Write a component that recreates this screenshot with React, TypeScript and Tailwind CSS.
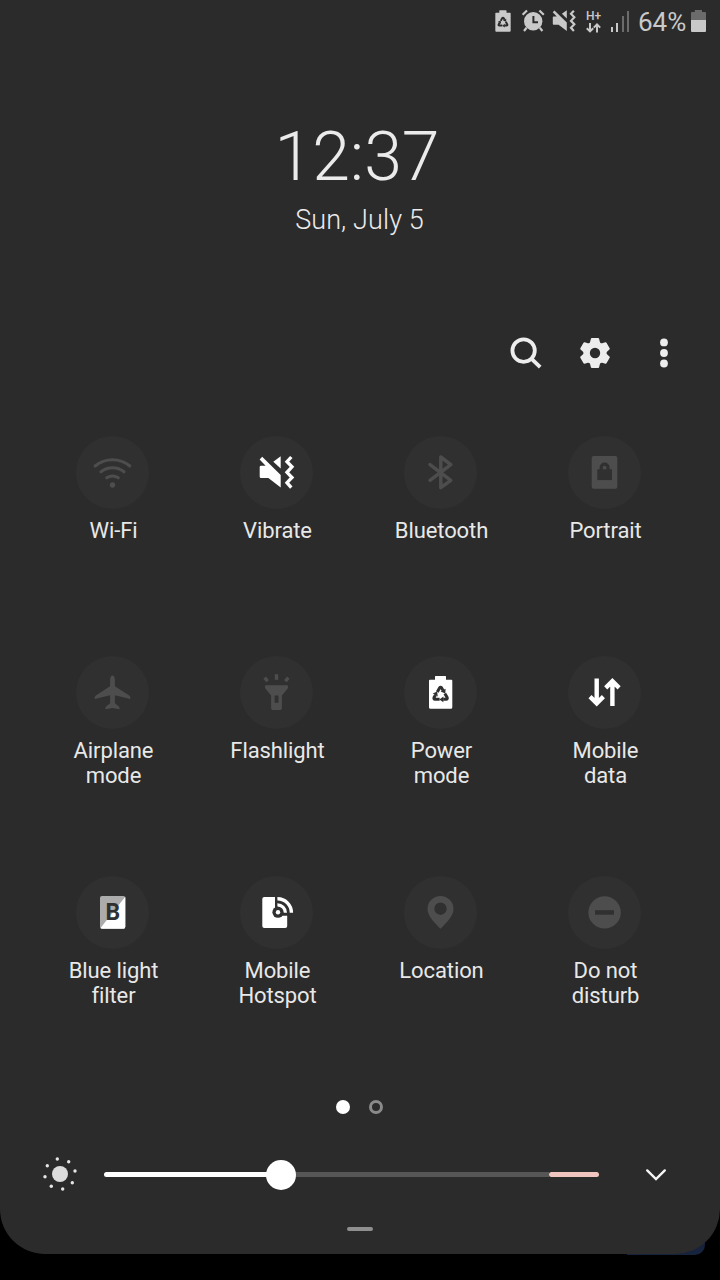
import type { ReactNode } from "react";

type Tile = {
  label: string;
  active: boolean;
  icon: ReactNode;
};

const TILE_BG = "#303030";

function VibrateShape() {
  return (
    <>
      <path
        d="M21 29.7H25.6L19.6 23.4L22.2 20.8L40.7 38.9V51.4L28.4 42H21Q19.7 42 19.7 40.7V31Q19.7 29.7 21 29.7Z"
        fill="currentColor"
      />
      <path d="M33.3 25.7L40.7 20.2V32.6Z" fill="currentColor" />
      <path
        d="M51.3 21L47 25.7L52 30.8L47 36.3L52 41.5L47 46.7L51.3 51.6"
        fill="none"
        stroke="currentColor"
        strokeWidth="3.3"
      />
    </>
  );
}

function EcoBatteryShape({ hole }: { hole: string }) {
  return (
    <>
      <path
        d="M31 23.7V20.6Q31 20 31.6 20H41.4Q42 20 42 20.6V23.7H47.3Q48.3 23.7 48.3 24.7V51.2Q48.3 52.7 46.8 52.7H26.5Q25 52.7 25 51.2V24.7Q25 23.7 26 23.7Z"
        fill="currentColor"
      />
      {[0, 120, 240].map((angle) => (
        <g key={angle} transform={`rotate(${angle} 36.6 38.9)`}>
          <path
            d="M33.3 35.9L35.5 32Q36.6 30.6 37.7 32L39.1 34.4"
            fill="none"
            stroke={hole}
            strokeWidth="3"
          />
          <path d="M36.6 35.6L41.6 32.8L41.3 37.6Z" fill={hole} />
        </g>
      ))}
    </>
  );
}

const TILES: Tile[] = [
  {
    label: "Wi-Fi",
    active: false,
    icon: (
      <>
        <g fill="none" stroke="currentColor" strokeWidth="3.1" strokeLinecap="round">
          <path d="M19.2 30A27 27 0 0 1 53.8 30" />
          <path d="M25 35.8A18.5 18.5 0 0 1 48 35.8" />
          <path d="M30.7 41.8A11 11 0 0 1 42.3 41.8" />
        </g>
        <circle cx="36.5" cy="49" r="2.7" fill="currentColor" />
      </>
    ),
  },
  { label: "Vibrate", active: true, icon: <VibrateShape /> },
  {
    label: "Bluetooth",
    active: false,
    icon: (
      <path
        d="M26 28.6L46.8 44.3L36.8 51.6V21L46.8 28.6L26 44.3"
        fill="none"
        stroke="currentColor"
        strokeWidth="3.5"
        strokeLinecap="round"
        strokeLinejoin="round"
      />
    ),
  },
  {
    label: "Portrait",
    active: false,
    icon: (
      <>
        <rect x="23.7" y="20" width="25.6" height="32.7" rx="2" fill="currentColor" />
        <rect x="29.3" y="33.3" width="14.7" height="10.8" fill={TILE_BG} />
        <path d="M33.2 34V31.5A3.4 3.4 0 0 1 40 31.5V34" fill="none" stroke={TILE_BG} strokeWidth="3.2" />
      </>
    ),
  },
  {
    label: "Airplane\nmode",
    active: false,
    icon: (
      <path
        d="M36.5 19.5C37.9 19.5 38.9 21.6 38.9 24V30.2L53.2 39.6Q54.6 40.6 54.3 42.9L38.9 39.2V47.2L42.8 50.4Q43.8 51.3 43.6 53.2L36.5 51.9L29.4 53.2Q29.2 51.3 30.2 50.4L34.1 47.2V39.2L18.7 42.9Q18.4 40.6 19.8 39.6L34.1 30.2V24C34.1 21.6 35.1 19.5 36.5 19.5Z"
        fill="currentColor"
      />
    ),
  },
  {
    label: "Flashlight",
    active: false,
    icon: (
      <>
        <path
          fillRule="evenodd"
          d="M26 29.2H47Q48 29.2 48 30.2V31.2Q48 32.2 47.3 33L41.9 39.4V52.3Q41.9 54 40.2 54H32.8Q31.1 54 31.1 52.3V39.4L25.7 33Q25 32.2 25 31.2V30.2Q25 29.2 26 29.2ZM34.6 39.4V46.8H38.5V39.4Z"
          fill="currentColor"
        />
        <path d="M36.5 18.2V23.8M24.7 21.6L27.6 25.2M48.3 21.6L45.4 25.2" stroke="currentColor" strokeWidth="3.4" />
      </>
    ),
  },
  { label: "Power\nmode", active: true, icon: <EcoBatteryShape hole={TILE_BG} /> },
  {
    label: "Mobile\ndata",
    active: true,
    icon: (
      <g fill="none" stroke="currentColor" strokeWidth="4.4">
        <path d="M28.7 22.6V47M22 40.6L28.7 47.3L35.4 40.6" />
        <path d="M44.4 50V26M37.7 31.9L44.4 25.2L51.1 31.9" />
      </g>
    ),
  },
  {
    label: "Blue light\nfilter",
    active: true,
    icon: (
      <>
        <rect x="24" y="20" width="25.3" height="32.7" rx="2" fill="#acacac" />
        <path d="M49.3 20.8V50.7Q49.3 52.7 47.3 52.7H26Q25 52.7 24.5 52Z" fill="#ffffff" />
        <text x="36.8" y="44" textAnchor="middle" fontFamily="Roboto, sans-serif" fontWeight="700" fontSize="23" fill={TILE_BG}>
          B
        </text>
      </>
    ),
  },
  {
    label: "Mobile\nHotspot",
    active: true,
    icon: (
      <>
        <path d="M24.3 21H35V36H38V39.8H47.2V50Q47.2 52 45.2 52H24.3Q22.3 52 22.3 50V23Q22.3 21 24.3 21Z" fill="currentColor" />
        <circle cx="38" cy="36.2" r="5.6" fill={TILE_BG} />
        <circle cx="38" cy="36.2" r="2.2" fill="currentColor" />
        <g fill="none" stroke="currentColor">
          <path d="M37.4 22.8A13.8 13.8 0 0 1 51.4 36.8" strokeWidth="3.4" />
          <path d="M37.4 28.9A7.9 7.9 0 0 1 45.4 36.8" strokeWidth="3.2" />
        </g>
      </>
    ),
  },
  {
    label: "Location",
    active: false,
    icon: (
      <path
        fillRule="evenodd"
        d="M36.5 20A13 13 0 0 1 49.5 33C49.5 39.5 43.5 45.8 36.5 52.7C29.5 45.8 23.5 39.5 23.5 33A13 13 0 0 1 36.5 20ZM36.5 26.5A6.2 6.2 0 1 0 36.5 38.9A6.2 6.2 0 1 0 36.5 26.5Z"
        fill="currentColor"
      />
    ),
  },
  {
    label: "Do not\ndisturb",
    active: false,
    icon: (
      <>
        <circle cx="36.6" cy="36.4" r="16.2" fill="currentColor" />
        <rect x="27" y="34.2" width="19" height="4.5" fill={TILE_BG} />
      </>
    ),
  },
];

function StatusBar() {
  return (
    <div className="flex h-[44px] items-center justify-end pr-[14px] text-[#c9c9c9]">
      <svg className="h-[22px] w-[16px] -translate-y-px" viewBox="24.5 19.7 24.3 33.3">
        <EcoBatteryShape hole="#2b2b2b" />
      </svg>
      <svg className="ml-[9.5px] size-6 -translate-y-px" viewBox="0 0 24 24">
        <circle cx="12.2" cy="12.2" r="9.2" fill="currentColor" />
        <path d="M1.6 5.8L6 1.5M22.8 5.8L18.4 1.5M5.6 18.8L3 22M18.8 18.8L21.4 22" stroke="currentColor" strokeWidth="2.2" />
        <path d="M12.4 7V13.2H17" fill="none" stroke="#2b2b2b" strokeWidth="2" />
      </svg>
      <svg className="ml-[7px] size-6 -translate-y-px" viewBox="18.5 18.5 36 36">
        <VibrateShape />
      </svg>
      <div className="ml-[9.5px] flex h-[22px] w-[17px] flex-col items-center">
        <span className="font-[Roboto,sans-serif] text-[12px] leading-[11px] font-medium">H+</span>
        <svg className="mt-[1px] h-[10px] w-[17px]" viewBox="0 0 17 10">
          <path
            d="M5 0V8M1.8 5.2L5 8.4L8.2 5.2M12 9.5V1.5M8.8 4.6L12 1.4L15.2 4.6"
            fill="none"
            stroke="currentColor"
            strokeWidth="2"
          />
        </svg>
      </div>
      <div className="ml-[8.5px] flex h-[21px] w-[19px] -translate-y-px items-end justify-between">
        <div className="h-[5px] w-[2px] bg-[#c9c9c9]" />
        <div className="h-[9px] w-[2px] bg-[#c9c9c9]" />
        <div className="h-[16px] w-[2px] bg-[#6b6b6b]" />
        <div className="h-[21px] w-[2px] bg-[#6b6b6b]" />
      </div>
      <span className="ml-[8.5px] w-[48px] text-[26px] leading-[30px]">64%</span>
      <svg className="ml-[5px] h-[22px] w-[15px] -translate-y-px" viewBox="0 0 15 22">
        <path d="M3.8 2V0H11V2H14Q15 2 15 3V10H0V3Q0 2 1 2Z" fill="#6b6b6b" />
        <path d="M0 10H15V21Q15 22 14 22H1Q0 22 0 21Z" fill="currentColor" />
      </svg>
    </div>
  );
}

function Toolbar() {
  return (
    <div className="mt-[99px] flex justify-end gap-[29px] pr-[36px] text-[#ededed]">
      <svg className="size-10" viewBox="0 0 40 40" fill="none" stroke="currentColor" strokeWidth="3.8">
        <circle cx="17.6" cy="17.6" r="11.2" />
        <path d="M25.6 25.8L34.2 34.2" />
      </svg>
      <svg className="size-10" viewBox="0 0 40 40">
        <g fill="currentColor">
          <circle cx="20" cy="20" r="11.6" />
          {[0, 60, 120, 180, 240, 300].map((angle) => (
            <path
              key={angle}
              d="M16.8 4.9H23.2Q23.9 4.9 24.1 5.7L25.3 10.5L20 14L14.7 10.5L15.9 5.7Q16.1 4.9 16.8 4.9Z"
              transform={`rotate(${angle} 20 20)`}
            />
          ))}
        </g>
        <circle cx="20" cy="20" r="5.2" fill="#2b2b2b" />
      </svg>
      <svg className="size-10" viewBox="0 0 40 40" fill="currentColor">
        <circle cx="20" cy="9.4" r="3.9" />
        <circle cx="20" cy="20" r="3.9" />
        <circle cx="20" cy="30.5" r="3.9" />
      </svg>
    </div>
  );
}

function QuickTile({ label, active, icon }: Tile) {
  return (
    <div className="flex h-[220px] flex-col items-center">
      <div className={`size-[73px] rounded-full bg-[#303030] ${active ? "text-white" : "text-[#4d4d4d]"}`}>
        <svg className="size-full" viewBox="0 0 73 73">
          {icon}
        </svg>
      </div>
      <p className="mt-[9px] ml-[2px] text-center text-[22px] leading-[25px] tracking-[-0.1px] whitespace-pre text-[#e8e8e8]">
        {label}
      </p>
    </div>
  );
}

const SUN_RAYS = [
  [17.3, 5],
  [28.7, 7.7],
  [35, 17],
  [32.3, 28.7],
  [22.7, 35],
  [11.3, 32.3],
  [5, 22.7],
  [7.3, 11.7],
];

function BrightnessRow() {
  return (
    <div className="mt-[40px] flex h-[41px] items-center pl-[40px]">
      <svg className="size-10 -translate-y-px" viewBox="0 0 40 40">
        <circle cx="20" cy="20" r="8" fill="#dcdcdc" />
        {SUN_RAYS.map(([x, y]) => (
          <circle key={`${x}-${y}`} cx={x} cy={y} r="1.7" fill="#e6e6e6" />
        ))}
      </svg>
      <div className="ml-[24px] flex w-[495px] items-center">
        <div className="h-[5px] w-[164.5px] rounded-l-full bg-white" />
        <div className="relative -mx-[3px] size-[30px] shrink-0 rounded-full bg-white" />
        <div className="h-[5px] flex-1 bg-[#565656]" />
        <div className="h-[5px] w-[50px] rounded-full bg-[#f1c5bf]" />
      </div>
      <svg className="ml-[37px] size-10 -translate-y-px" viewBox="0 0 40 40">
        <path
          d="M11.2 16.4L20 25L28.8 16.4"
          fill="none"
          stroke="#f5f5f5"
          strokeWidth="2.4"
          strokeLinecap="round"
        />
      </svg>
    </div>
  );
}

export default function App() {
  return (
    <div className="relative h-[1280px] w-[720px] overflow-hidden bg-black font-[Roboto,sans-serif]">
      {/* dimmed card of the app underneath */}
      <div className="absolute top-[1215px] left-[627px] h-[40px] w-[78px] rounded-br-[10px] bg-[#17233c]" />

      <main className="relative h-[1254px] rounded-b-[45px] bg-[#2b2b2b]">
        <StatusBar />

        <div className="mt-[79px] flex flex-col items-center font-light text-[#ebebeb]">
          <p className="mr-[6px] text-[68px] leading-[69px]">12:37</p>
          <p className="mt-[15px] mr-px text-[27px] leading-[27px] tracking-[0.1px]">Sun, July 5</p>
        </div>

        <Toolbar />

        <div className="mt-[63px] ml-[30.5px] grid w-[656px] grid-cols-4">
          {TILES.map((tile) => (
            <QuickTile key={tile.label} {...tile} />
          ))}
        </div>

        <div className="mt-[4px] mr-[2px] flex justify-center gap-[19px]">
          <div className="size-[14px] rounded-full bg-white" />
          <div className="size-[14px] rounded-full border-[3px] border-[#8a8a8a]" />
        </div>

        <BrightnessRow />

        <div className="mx-auto mt-[32px] h-[4px] w-[26px] rounded-full bg-[#8f8f8f]" />
      </main>
    </div>
  );
}
